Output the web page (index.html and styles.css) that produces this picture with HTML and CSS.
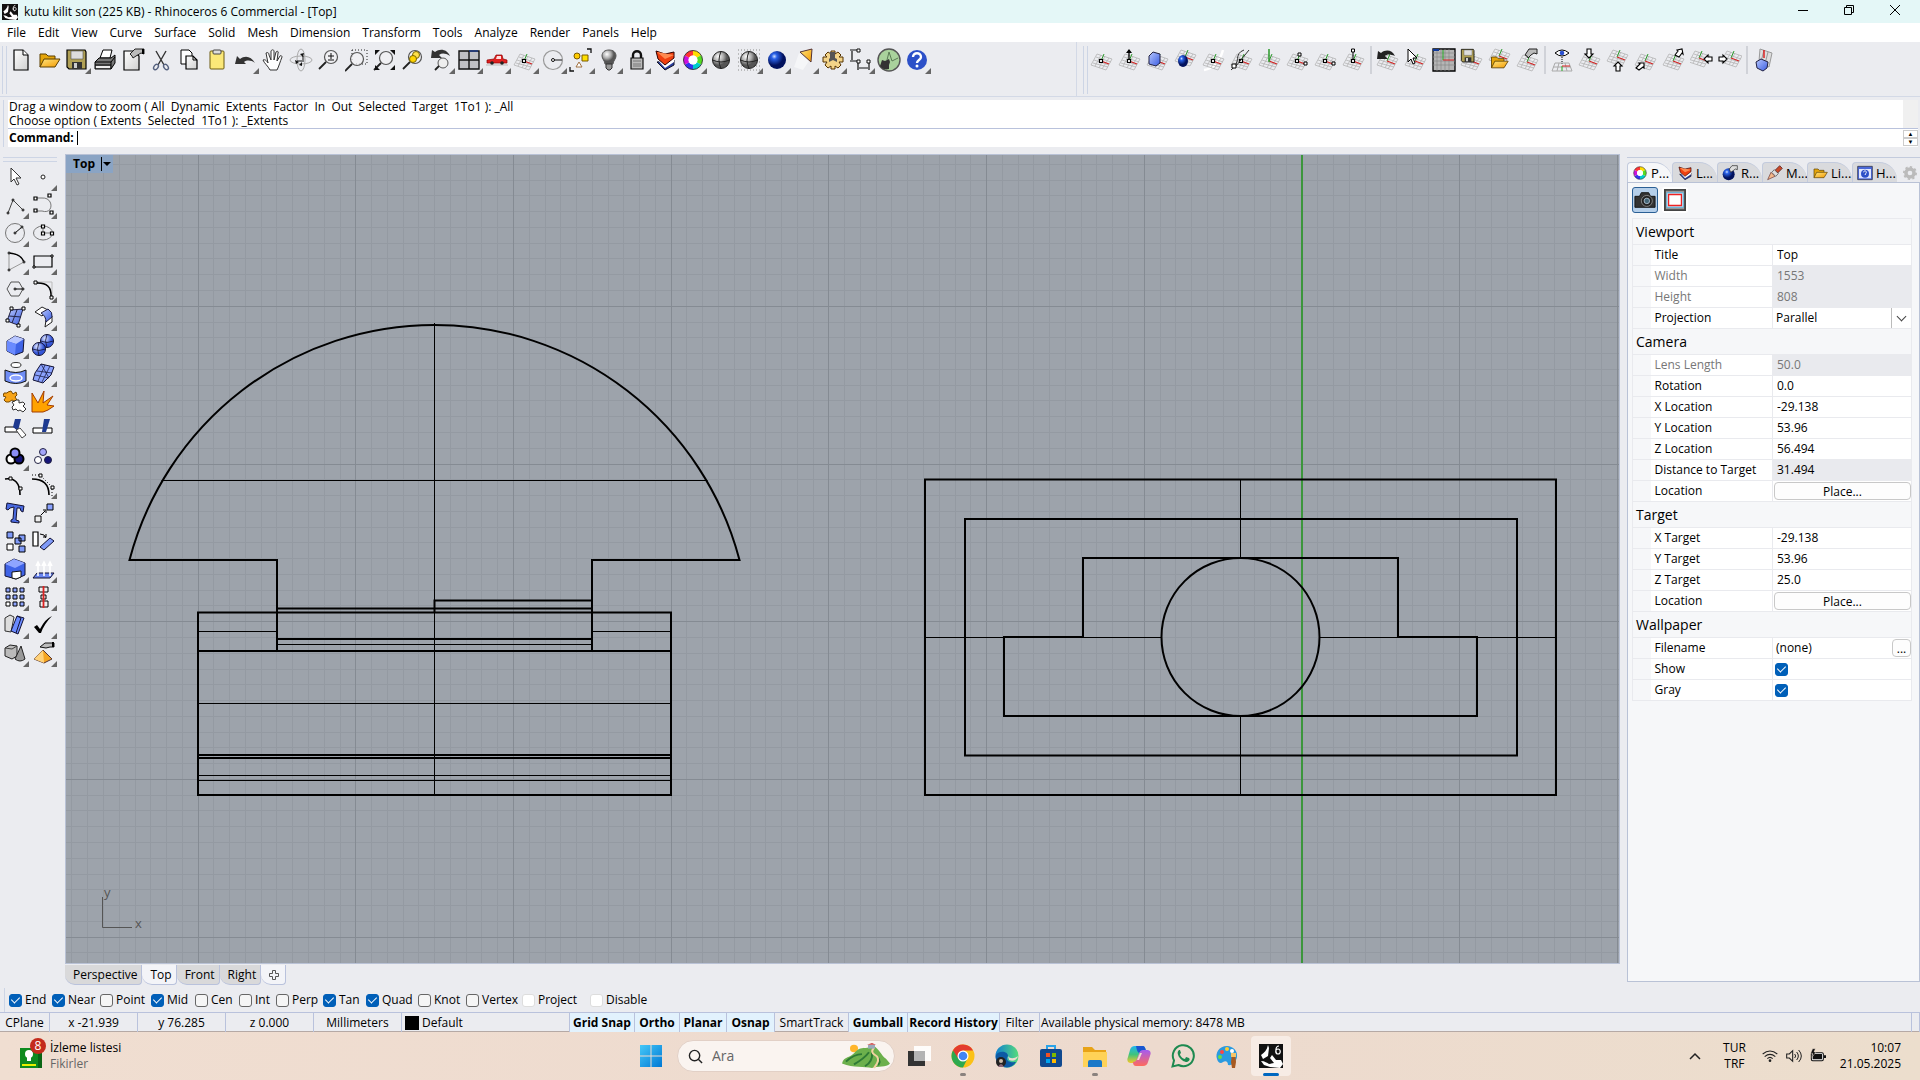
FILE: index.html
```html
<!DOCTYPE html>
<html lang="en">
<head>
  <meta charset="UTF-8" />
  <meta name="viewport" content="width=device-width, initial-scale=1" />
  <title>kutu kilit son (225 KB) - Rhinoceros 6 Commercial - [Top]</title>
  <link rel="stylesheet" href="styles.css">
</head>
<body>

  <!-- Icon sprite -->
  <svg class="sprite" width="0" height="0" aria-hidden="true">
    <defs>
      <linearGradient id="gPaper" x2="1" y2="1"><stop stop-color="#fff"/><stop offset="1" stop-color="#cfcfcf"/></linearGradient>
      <linearGradient id="gGold" x2="1" y2="1"><stop stop-color="#ffe680"/><stop offset="1" stop-color="#f39a00"/></linearGradient>
      <linearGradient id="gBlue" x2="1" y2="1"><stop stop-color="#b8c8ff"/><stop offset="1" stop-color="#3a5ce0"/></linearGradient>
      <linearGradient id="gWin" x2="1" y2="1"><stop stop-color="#45c8f8"/><stop offset="1" stop-color="#0078d4"/></linearGradient>
      <linearGradient id="gEdge" x2="1" y2="0"><stop stop-color="#0f7fd0"/><stop offset="1" stop-color="#57dc7c"/></linearGradient>
      <linearGradient id="gCopL" x2="0" y2="1"><stop stop-color="#1fb6f0"/><stop offset=".5" stop-color="#3fc47c"/><stop offset="1" stop-color="#f5c928"/></linearGradient>
      <linearGradient id="gCopR" x2="0" y2="1"><stop stop-color="#a45cf0"/><stop offset="1" stop-color="#ff6a5c"/></linearGradient>
      <radialGradient id="gGray" cx=".35" cy=".3"><stop stop-color="#fff"/><stop offset=".6" stop-color="#aaa"/><stop offset="1" stop-color="#555"/></radialGradient>
      <radialGradient id="gBall" cx=".35" cy=".3"><stop stop-color="#cfe0ff"/><stop offset=".3" stop-color="#2a62e8"/><stop offset="1" stop-color="#02125e"/></radialGradient>
      <radialGradient id="gBall2" cx=".35" cy=".3"><stop stop-color="#dfe6ff"/><stop offset="1" stop-color="#3556d8"/></radialGradient>
    </defs>

    <symbol id="i-rhino" viewBox="0 0 24 24"><path fill="#111" d="M0 0h24v24H0z"/><path fill="#fff" d="M9 1c-1 5-4 8-7 10l2 4 5-3 1-8zM2 17c4 0 6 2 8 3l5-1-4-5 2-3 4 5 5 0 2 4-3 4-10-1-6-2z"/><path d="M20 2c-4 0-4 8-1 8s3-5 0-5-3 5 0 5" fill="none" stroke="#fff" stroke-width="1.2"/></symbol>
    <symbol id="i-new" viewBox="0 0 24 24"><path d="M5 2h9l5 5v15H5z" fill="url(#gPaper)" stroke="#000" stroke-width="1.2"/><path d="M14 2v5h5" fill="#fff" stroke="#000"/></symbol>
    <symbol id="i-open" viewBox="0 0 24 24"><path d="M3 19V6h6l2 2h7v3" fill="#e5a50a" stroke="#5a3f00"/><path d="M3 19l4-8h16l-5 8z" fill="url(#gGold)" stroke="#5a3f00"/></symbol>
    <symbol id="i-save" viewBox="0 0 24 24"><path d="M2 2h18l1 2v17H4l-2-2z" fill="#b0a055" stroke="#000" stroke-width="1.2"/><path d="M6 3h12v8H6z" fill="#ddd" stroke="#555" stroke-width=".6"/><path d="M7 14h10v7H7z" fill="#333"/><path d="M9 15h3v5H9z" fill="#ccc"/></symbol>
    <symbol id="i-print" viewBox="0 0 24 24"><path d="M7 10l3-8h9l-2 8z" fill="#fff" stroke="#000"/><path d="M2 14l4-4h12l4-3v8l-4 6H2z" fill="#777" stroke="#000"/><path d="M2 14h16l4-5M2 17h16M18 14v7" stroke="#000" fill="none"/><path d="M3 18h14v2H3z" fill="#eee"/></symbol>
    <symbol id="i-props" viewBox="0 0 24 24"><path d="M3 3h9l6 5v14H3z" fill="url(#gPaper)" stroke="#000" stroke-width="1.2"/><path d="M9 6l5-5h9v5l-3-1-5 3-3 2-1-2z" fill="#bbb" stroke="#222"/><path d="M21 1h2v5h-2z" fill="#000"/></symbol>
    <symbol id="i-cut" viewBox="0 0 24 24"><path d="M7 3l8 14M17 3L9 17" stroke="#333" stroke-width="1.4"/><ellipse cx="7" cy="19" rx="2" ry="3" fill="none" stroke="#56627f" stroke-width="1.4" transform="rotate(35 7 19)"/><ellipse cx="17" cy="19" rx="2" ry="3" fill="none" stroke="#56627f" stroke-width="1.4" transform="rotate(-35 17 19)"/></symbol>
    <symbol id="i-copy" viewBox="0 0 24 24"><path d="M4 2h8l3 3v11H4z" fill="#fff" stroke="#000"/><path d="M9 8h7l4 4v9H9z" fill="url(#gPaper)" stroke="#000" stroke-width="1.2"/><path d="M16 8v4h4" fill="none" stroke="#000"/></symbol>
    <symbol id="i-paste" viewBox="0 0 24 24"><rect x="5" y="3" width="14" height="18" rx="1" fill="#fbe878" stroke="#6b5a10"/><rect x="8" y="2" width="8" height="4" rx="1" fill="#ddd" stroke="#444"/></symbol>
    <symbol id="i-undo" viewBox="0 0 24 24"><path d="M2 16l2-8 3 3c5-4 11-3 15 4-4-3-8-3-11-1l2 2z" fill="#333"/></symbol>
    <symbol id="i-pan" viewBox="0 0 24 24"><path d="M9 22c-2-4-6-7-7-10 2-1 4 1 5 3L5 5c2-1 3 0 3 2l2 5V3c1-2 3-1 3 0v9l2-8c1-1 3-1 2 1l-1 8 3-5c1-1 2 0 2 1-2 5-3 9-5 13z" fill="#fff" stroke="#333"/></symbol>
    <symbol id="i-rotate" viewBox="0 0 24 24"><g fill="none" stroke="#aaa"><ellipse cx="12" cy="12" rx="11" ry="4"/><ellipse cx="12" cy="12" rx="4" ry="11"/></g><path d="M11 6l4-1-1 4zM13 18l-3-1 3-3zM6 12l4 2-3 2z" fill="#111"/><path d="M8 13h5M14 8v6" stroke="#111"/></symbol>
    <symbol id="lens" viewBox="0 0 24 24"><circle cx="14" cy="9" r="6.5" fill="#f2f2f4" fill-opacity=".7" stroke="#555" stroke-width="1.2"/><path d="M9 14l-7 7" stroke="#222" stroke-width="1.8"/></symbol>
    <symbol id="i-zoom" viewBox="0 0 24 24"><use href="#lens"/><path d="M11 8h6M14 5v6M11 12h6" stroke="#111"/></symbol>
    <symbol id="i-zoomwin" viewBox="0 0 24 24"><path d="M7 2h15v14H7z" fill="none" stroke="#222" stroke-dasharray="1 2"/><use href="#lens" y="2" x="-2"/></symbol>
    <symbol id="i-zoomext" viewBox="0 0 24 24"><use href="#lens" x="-1" y="1"/><path d="M2 2h5L2 7zM22 2h-5l5 5zM2 22v-5l5 5zM22 22v-5l-5 5z" fill="#111"/></symbol>
    <symbol id="i-zoomsel" viewBox="0 0 24 24"><use href="#lens"/><circle cx="15" cy="7" r="3.5" fill="#ffe14a" stroke="#7a6500"/><circle cx="12" cy="11" r="3.5" fill="#ffd400" stroke="#7a6500"/></symbol>
    <symbol id="i-zoomundo" viewBox="0 0 24 24"><path d="M2 10l1-8 3 2c5-4 12-3 15 4-5-3-8-3-11-1l3 3z" fill="#333"/><circle cx="14" cy="15" r="5" fill="#eee" stroke="#555"/><path d="M10 18l-4 4" stroke="#222" stroke-width="1.8"/></symbol>
    <symbol id="i-4view" viewBox="0 0 24 24"><path d="M2 3h20v18H2z" fill="#c0c0c4" stroke="#111" stroke-width="1.4"/><path d="M12 3v18M2 12h20" stroke="#111" stroke-width="1.4"/><path d="M12 3h9" stroke="#1c3a8c" stroke-width="1.4"/></symbol>
    <symbol id="i-car" viewBox="0 0 24 24"><path d="M1 17h22" stroke="#bbb"/><path d="M2 12l7-1 2-4h6l1 4 4 1v3H2z" fill="#e02020" stroke="#8a0000" stroke-width=".7"/><path d="M12 8h4v3h-5z" fill="#fdd"/><circle cx="7" cy="15" r="1.800" fill="#222"/><circle cx="17" cy="15" r="1.800" fill="#222"/></symbol>
    <symbol id="cp" viewBox="0 0 24 24"><path d="M7 6l15 5-6 11-15-5zM11 7L5 18M15 8L9 20M19 10l-7 11M6 9l15 5M4 12l15 5M3 15l15 4" fill="none" stroke="#b4b4b4" stroke-width=".8"/><path d="M11 13l3-7" stroke="#2a9a2a"/><path d="M11 13l8 3" stroke="#d02020" stroke-width="1.2"/></symbol>
    <symbol id="i-cplane" viewBox="0 0 24 24"><use href="#cp"/><path d="M9.500 11.500h3v3h-3z" fill="#fff" stroke="#000" stroke-width="1.2"/></symbol>
    <symbol id="i-circ" viewBox="0 0 24 24"><circle cx="12" cy="12" r="9.5" fill="none" stroke="#999" stroke-width="1.2"/><path d="M12 12h9" stroke="#111"/><circle cx="12" cy="12" r="1.5" fill="#fff" stroke="#111"/></symbol>
    <symbol id="i-sel" viewBox="0 0 24 24"><path d="M18 1h4v4M1 19v4h4" fill="none" stroke="#111" stroke-width="1.3"/><circle cx="8" cy="8" r="3" fill="#fc0" stroke="#7a5a00"/><path d="M13 7h6v6h-6z" fill="#ffe000" stroke="#7a5a00"/><path d="M10 14l3 5H7z" fill="#fff" stroke="#a07040"/></symbol>
    <symbol id="i-bulb" viewBox="0 0 24 24"><path d="M8 16c0-3-3-5-3-8 0-4 3-6 7-6s7 2 7 6c0 3-3 5-3 8z" fill="url(#gGray)" stroke="#555" /><path d="M9 16h6v4l-2 2h-2l-2-2z" fill="#999" stroke="#333"/></symbol>
    <symbol id="i-lock" viewBox="0 0 24 24"><path d="M8 11V7c0-5 8-5 8 0v4" fill="none" stroke="#111" stroke-width="2.4"/><path d="M6 10h12v11H6z" fill="#bbb" stroke="#111" stroke-width="1.2"/><path d="M8 13h8M8 16h8M8 18h8" stroke="#777"/></symbol>
    <symbol id="i-layer" viewBox="0 0 24 24"><path d="M4 14l8 8 9-5v-5z" fill="#2b3fa0" stroke="#112"/><path d="M4 11l8 9 9-6V9z" fill="#fff"/><path d="M3 3l9 3 9-2v6l-9 7-7-6z" fill="#f04010" stroke="#300"/><path d="M4 4l17 3-9 4z" fill="#ff8a50"/></symbol>
    <symbol id="i-wheel" viewBox="0 0 24 24"><g fill="none" stroke-width="5"><path d="M12 5a7 7 0 0 1 6 3.500" stroke="#fd0"/><path d="M18 8.500a7 7 0 0 1 0 7" stroke="#5d2"/><path d="M18 15.500a7 7 0 0 1-6 3.500" stroke="#0cc"/><path d="M12 19a7 7 0 0 1-6-3.500" stroke="#33e"/><path d="M6 15.500a7 7 0 0 1 0-7" stroke="#c1d"/><path d="M6 8.500A7 7 0 0 1 12 5" stroke="#f33"/></g><circle cx="12" cy="12" r="9.500" fill="none" stroke="#222" stroke-width=".8"/><circle cx="12" cy="12" r="4.500" fill="#fff"/></symbol>
    <symbol id="i-sphere" viewBox="0 0 24 24"><circle cx="12" cy="12" r="8.500" fill="url(#gGray)" stroke="#222"/><path d="M3.500 12q8.500 4 17 0M12 3.500q-4 9 0 17" fill="none" stroke="#222"/></symbol>
    <symbol id="i-spheregrid" viewBox="0 0 24 24"><path d="M1 2h22M1 6h22M1 10h22M1 14h22M1 18h22M1 22h22" stroke="#aaa" stroke-width="1.5" stroke-dasharray="1 2"/><use href="#i-sphere"/></symbol>
    <symbol id="i-ball" viewBox="0 0 24 24"><circle cx="12" cy="12" r="9" fill="url(#gBall)"/></symbol>
    <symbol id="i-spot" viewBox="0 0 24 24"><path d="M6 5l-5 14 9 3 6-9z" fill="#fff" opacity=".5"/><path d="M7 4l12-3-1 13z" fill="url(#gGold)" stroke="#533"/></symbol>
    <symbol id="i-gear" viewBox="0 0 24 24"><path d="M10 3h4v3l3-2 3 3-2 2h4v5h-4l2 3-3 3-3-2v3h-4v-3l-3 2-3-3 2-3H2V9h4L4 7l3-3 3 2z" fill="#f3d489" stroke="#553300"/><path d="M9 4h5v6l2 1v3l-4-2-4 2v-3l1-1z" fill="#555"/></symbol>
    <symbol id="i-dims" viewBox="0 0 24 24"><path d="M1 2h8M1 13h8M3 3v9M9 13v9M20 13v9M10 20h9" fill="none" stroke="#111" stroke-width="1.2"/><path d="M8 1h3v3H8zM8 12h3v3H8zM18 12h3v3h-3z" fill="#fff" stroke="#111"/></symbol>
    <symbol id="i-gh" viewBox="0 0 24 24"><circle cx="12" cy="12" r="11" fill="#a9d29c" stroke="#555" stroke-width="1.4"/><path d="M3 18l2-6 3 1 4-2 1 3-1 3v4c-4 1-7 0-9-3z" fill="#333"/><path d="M10 12l2-8 3 9 6-3" fill="none" stroke="#5a7a54"/></symbol>
    <symbol id="i-help" viewBox="0 0 24 24"><circle cx="12" cy="12" r="10" fill="#2c50c8"/><path d="M8 9c0-5 8-5 8 0 0 3-4 3-4 6" fill="none" stroke="#fff" stroke-width="2.4"/><circle cx="12" cy="18" r="1.500" fill="#fff"/></symbol>

    <!-- CPlane toolbar -->
    <symbol id="c-elev" viewBox="0 0 24 24"><use href="#i-cplane"/><path d="M11 11V2" stroke="#000" stroke-width="1.3"/><path d="M8 5l3-4 3 4z"/></symbol>
    <symbol id="c-obj" viewBox="0 0 24 24"><use href="#cp"/><path d="M3 8l4-4 7 2v9l-4 3-7-2z" fill="url(#gBlue)" stroke="#224"/></symbol>
    <symbol id="c-srf" viewBox="0 0 24 24"><use href="#cp" y="-4"/><ellipse cx="9" cy="13" rx="5" ry="6" fill="url(#gBall)"/></symbol>
    <symbol id="c-crv" viewBox="0 0 24 24"><path d="M2 22Q16 20 21 2" fill="none" stroke="#fff" stroke-width="2.500"/><use href="#i-cplane"/></symbol>
    <symbol id="c-crv2" viewBox="0 0 24 24"><use href="#i-cplane"/><path d="M1 22C12 14 3 6 14 2M6 18L19 2" fill="none" stroke="#333"/><path d="M2 16h4v4H2z" fill="#fff" stroke="#000"/></symbol>
    <symbol id="c-vert" viewBox="0 0 24 24"><use href="#cp"/><path d="M11 14V1" stroke="#2a9a2a" stroke-width="1.500"/></symbol>
    <symbol id="c-3pt" viewBox="0 0 24 24"><use href="#i-cplane"/><path d="M12 5h3v3h-3zM18 14h3v3h-3z" fill="#fff" stroke="#000"/></symbol>
    <symbol id="c-x" viewBox="0 0 24 24"><use href="#i-cplane"/><path d="M18 14h3v3h-3z" fill="#fff" stroke="#000"/></symbol>
    <symbol id="c-z" viewBox="0 0 24 24"><use href="#i-cplane"/><path d="M11 11V3" stroke="#000"/><path d="M9.500 1h3v3h-3z" fill="#fff" stroke="#000"/></symbol>
    <symbol id="c-prev" viewBox="0 0 24 24"><use href="#cp"/><path d="M1 11l1-8 3 2c5-4 11-3 14 3-5-2-8-2-10 0l3 3z" fill="#222"/></symbol>
    <symbol id="c-pick" viewBox="0 0 24 24"><use href="#cp"/><path d="M4 1v13l3-3 2 5 2-1-2-5h4z" fill="#fff" stroke="#000"/></symbol>
    <symbol id="c-named" viewBox="0 0 24 24"><path d="M1 1h22v22H1z" fill="#b5b5b5" stroke="#000" stroke-width="1.300"/><path d="M1 5h22M1 9h22M1 13h22M1 17h22M5 1v22M9 1v22M13 1v22M17 1v22" stroke="#888" stroke-width=".7"/><path d="M11 12V2" stroke="#2a2"/><path d="M11 12h11" stroke="#d22"/><path d="M1 1h6v2H1z" fill="#113a9a"/></symbol>
    <symbol id="c-save" viewBox="0 0 24 24"><use href="#cp"/><use href="#i-save" width="16" height="16"/></symbol>
    <symbol id="c-open" viewBox="0 0 24 24"><use href="#cp" y="-5"/><use href="#i-open" y="4" width="22" height="20"/></symbol>
    <symbol id="c-prop" viewBox="0 0 24 24"><use href="#cp" y="1"/><path d="M9 7l4-6h8v5l-3-1-3 2-3 3-1-2z" fill="#bbb" stroke="#222"/></symbol>
    <symbol id="c-top" viewBox="0 0 24 24"><path d="M5 5q7-6 14 0-7 6-14 0z" fill="#fff" stroke="#000"/><circle cx="12" cy="5" r="2.300" fill="#2a50d0"/><path d="M12 9v8" stroke="#000" stroke-dasharray="1 1"/><path d="M5 15h14l3 8H2zM3 19h18M9 15l-2 8M15 15l2 8" fill="none" stroke="#aaa"/><path d="M12 18v5" stroke="#2a2"/><path d="M12 18h8" stroke="#d22"/></symbol>
    <symbol id="arrow" viewBox="0 0 24 24"><path d="M9 1h4v5h2l-4 4-4-4h2z" fill="#fff" stroke="#000" stroke-width="1.100"/></symbol>
    <symbol id="c-down" viewBox="0 0 24 24"><use href="#cp"/><use href="#arrow"/></symbol>
    <symbol id="c-up" viewBox="0 0 24 24"><use href="#cp" y="-4"/><path d="M10 23h4v-5h2l-4-4-4 4h2z" fill="#fff" stroke="#000" stroke-width="1.100"/></symbol>
    <symbol id="c-front" viewBox="0 0 24 24"><use href="#cp"/><path d="M2 20l4-4-1-1h5v5l-1-1-4 3z" fill="#fff" stroke="#000" stroke-width="1.100"/></symbol>
    <symbol id="c-back" viewBox="0 0 24 24"><use href="#cp"/><path d="M13 7l3-4-1-1 5-1 1 5-1-1-3 4z" fill="#fff" stroke="#000" stroke-width="1.100"/></symbol>
    <symbol id="c-left" viewBox="0 0 24 24"><use href="#cp" x="-2" y="-3"/><path d="M22 9h-4V7l-4 4 4 4v-2h4z" fill="#fff" stroke="#000" stroke-width="1.100"/></symbol>
    <symbol id="c-right" viewBox="0 0 24 24"><use href="#cp" x="2" y="-3"/><path d="M1 9h4V7l4 4-4 4v-2H1z" fill="#fff" stroke="#000" stroke-width="1.100"/></symbol>
    <symbol id="c-world" viewBox="0 0 24 24"><path d="M8 1l12 4-3 14-10-6zM12 2l-3 12M16 4l-3 12" fill="#ddd" stroke="#999"/><path d="M12 10V2" stroke="#d22" stroke-width="1.500"/><path d="M4 14l5-3 7 3-1 6-4 3-6-3z" fill="url(#gBlue)" stroke="#224"/></symbol>

    <!-- Left palette -->
    <symbol id="p-arrow" viewBox="0 0 24 24"><path d="M8 3v14l3-3 3 6 2-1-3-6h5z" fill="#fff" stroke="#333"/></symbol>
    <symbol id="p-point" viewBox="0 0 24 24"><circle cx="12" cy="12" r="2" fill="#fff" stroke="#222"/></symbol>
    <symbol id="p-poly" viewBox="0 0 24 24"><path d="M5 20L10 7l10 10" fill="none" stroke="#444"/><g fill="#fff" stroke="#000"><circle cx="5" cy="20" r="1"/><circle cx="10" cy="7" r="1"/><circle cx="20" cy="17" r="1"/></g></symbol>
    <symbol id="p-curve" viewBox="0 0 24 24"><path d="M5 5h6c12-1 12 17 0 13H5" fill="none" stroke="#777"/><path d="M3 4h3v3H3zM17 1h3v3h-3zM3 16h3v3H3zM19 18h3v3h-3z" fill="#fff" stroke="#000" stroke-width="1.200"/></symbol>
    <symbol id="p-circle" viewBox="0 0 24 24"><circle cx="12" cy="12" r="9.500" fill="none" stroke="#777"/><path d="M12 12l7-6" stroke="#000"/><g fill="#fff" stroke="#000"><circle cx="12" cy="12" r="1"/><circle cx="19" cy="6" r="1"/></g></symbol>
    <symbol id="p-ellipse" viewBox="0 0 24 24"><ellipse cx="12" cy="12" rx="9.500" ry="7" fill="none" stroke="#777"/><path d="M12 12V5M12 12h9" stroke="#777"/><path d="M10.500 4h3v3h-3zM10.500 11h3v3h-3zM19.500 11h3v3h-3z" fill="#fff" stroke="#000" stroke-width="1.200"/></symbol>
    <symbol id="p-arc" viewBox="0 0 24 24"><path d="M6 4v17l15-8" fill="none" stroke="#999"/><path d="M6 4q12 1 15 9" fill="none" stroke="#000" stroke-width="1.300"/><g fill="#fff" stroke="#000"><circle cx="6" cy="4" r="1"/><circle cx="6" cy="21" r="1"/><circle cx="21" cy="13" r="1"/></g></symbol>
    <symbol id="p-rect" viewBox="0 0 24 24"><path d="M3 7h18v11H3z" fill="none" stroke="#000" stroke-width="1.200"/><path d="M20 6h2v2h-2zM2 17h2v2H2z" fill="#fff" stroke="#000"/></symbol>
    <symbol id="p-hex" viewBox="0 0 24 24"><path d="M4 12l4-7h8l4 7-4 7H8z" fill="none" stroke="#555"/><path d="M12 12h8" stroke="#000"/><circle cx="12" cy="12" r="1" fill="#fff" stroke="#000"/><circle cx="20" cy="12" r="1" fill="#fff" stroke="#000"/></symbol>
    <symbol id="p-fillet" viewBox="0 0 24 24"><path d="M4 5h17v16" fill="none" stroke="#bbb"/><path d="M5 6q16-1 15 14" fill="none" stroke="#000" stroke-width="1.600"/><path d="M3 4h3v3H3zM19 19h3v3h-3z" fill="#fff" stroke="#000"/></symbol>
    <symbol id="p-srf" viewBox="0 0 24 24"><path d="M8 5l12-1-5 16-11-4z" fill="url(#gBlue)" stroke="#224"/><path d="M14 5l-5 13M6 11l12 1" stroke="#224"/><path d="M7 2h3v3H7zM19 2h3v3h-3zM3 14h3v3H3zM14 19h3v3h-3z" fill="#fff" stroke="#000"/></symbol>
    <symbol id="p-loft" viewBox="0 0 24 24"><path d="M4 7l7-5 6 3-6 6z" fill="#fff" stroke="#222"/><path d="M15 15l6-4v6l-7 5z" fill="#fff" stroke="#222"/><path d="M10 8l7-4q5 3 4 8l-6 5q0-6-5-9z" fill="url(#gBlue)" stroke="#224"/></symbol>
    <symbol id="p-box" viewBox="0 0 24 24"><path d="M4 8l8-5 9 3-1 13-8 3-8-4z" fill="#3f63e6" stroke="#113"/><path d="M4 8l8-5 9 3-8 5z" fill="#b8c6ff"/><path d="M4 8l9 3-1 11-8-4z" fill="#6a8aff"/></symbol>
    <symbol id="p-spheres" viewBox="0 0 24 24"><circle cx="16" cy="8" r="6.500" fill="url(#gBall2)" stroke="#113"/><circle cx="8" cy="16" r="6.500" fill="url(#gBall2)" stroke="#113"/><path d="M9.500 8q6.500 3 13 0M1.500 16q6.500 3 13 0M16 1.500q-3 6 0 13M8 9.500q-3 6 0 13" fill="none" stroke="#113" stroke-width=".8"/></symbol>
    <symbol id="p-proj" viewBox="0 0 24 24"><ellipse cx="13" cy="4" rx="5" ry="2.500" fill="#fff" stroke="#333"/><path d="M2 9q11 5 21 0v11q-10 5-21 0z" fill="#6f8df5" stroke="#111"/><ellipse cx="13" cy="17" rx="6" ry="3" fill="#8aa2ff" stroke="#fff" stroke-width="1.500"/></symbol>
    <symbol id="p-mesh" viewBox="0 0 24 24"><path d="M10 3l13 3-3 8-8 8-10-3 2-7z" fill="#8aa2ff" stroke="#113"/><path d="M14 4L7 20M19 5l-8 16M6 10l15 2M4 14l14 3M10 3l8 14" fill="none" stroke="#113" stroke-width=".7"/></symbol>
    <symbol id="p-join" viewBox="0 0 24 24"><path d="M5 3l3-1 2 3 3-2 1 3-2 2 2 3-3 1-2-1-3 2-3 0-2-2 2-3-3-1 1-3 3 0z" fill="#f7a416" stroke="#7a4a00"/><path d="M13 11l3 0 0 3 4-1 2 2-2 2 3 3-3 3-3-2-2 1-2-2-3 1-1-3 2-2-2-3 3-1z" fill="#fff" stroke="#333"/></symbol>
    <symbol id="p-explode" viewBox="0 0 24 24"><path d="M1 23V4l6 10 6-12-1 12 10-7-6 9 7 1-6 4-5 2z" fill="#ffa200" stroke="#a33c00"/></symbol>
    <symbol id="p-trim" viewBox="0 0 24 24"><path d="M2 10h10l3 5H2z" fill="#fff" stroke="#000"/><path d="M12 2h6l-3 12-5-4z" fill="#1e3a90"/><path d="M13 13l4-2 6 7-4 3z" fill="#fff" stroke="#444"/></symbol>
    <symbol id="p-split" viewBox="0 0 24 24"><path d="M2 11h19v5H2z" fill="#fff" stroke="#000"/><path d="M13 2h6l-4 13h-4z" fill="#1e3a90"/></symbol>
    <symbol id="p-group" viewBox="0 0 24 24"><g stroke="#000" stroke-width="2"><circle cx="8" cy="14" r="4.500" fill="#fff"/><circle cx="16" cy="14" r="4.500" fill="#15157a"/><circle cx="12" cy="8" r="4.500" fill="#8a8df5"/></g></symbol>
    <symbol id="p-ungroup" viewBox="0 0 24 24"><g stroke="#224"><circle cx="12" cy="7" r="3.500" fill="#a4a6fa"/><circle cx="7" cy="15" r="3.500" fill="#fff"/><circle cx="17" cy="15" r="3.500" fill="#15157a"/></g></symbol>
    <symbol id="p-edit" viewBox="0 0 24 24"><path d="M2 6q15-2 15 16" fill="none" stroke="#000" stroke-width="1.600"/><path d="M6 4h3v3H6zM16 14h3v3h-3z" fill="#fff" stroke="#000"/></symbol>
    <symbol id="p-ctrl" viewBox="0 0 24 24"><path d="M1 6q17 0 17 16" fill="none" stroke="#000" stroke-width="1.600"/><path d="M1 2h8l12 12v9" fill="none" stroke="#000" stroke-dasharray="1 2"/><path d="M8 1h3v3H8zM20 13h3v3h-3z" fill="#fff" stroke="#000"/></symbol>
    <symbol id="p-text" viewBox="0 0 24 24"><path d="M4 2l17 3-1 6-2-1-1-3h-3l-1 12 3 1v2l-8-1v-2l2-1 1-12-4 1-2 2-2-1z" fill="#4a6ae0" stroke="#113"/></symbol>
    <symbol id="p-move" viewBox="0 0 24 24"><path d="M16 3h6v6h-6z" fill="#8aa2ff" stroke="#000"/><path d="M4 15h6v6H4z" fill="#eee" stroke="#000"/><path d="M10 14l4-4M12 9h3v3" fill="none" stroke="#000"/></symbol>
    <symbol id="p-copy" viewBox="0 0 24 24"><g fill="#7f9af8" stroke="#000"><path d="M4 3h6v6H4zM16 6h6v6h-6zM12 9h6v6h-6zM16 17h6v6h-6z"/></g><path d="M4 15h6v6H4z" fill="#fff" stroke="#000"/></symbol>
    <symbol id="p-rot" viewBox="0 0 24 24"><path d="M2 3h5v14H2z" fill="#fff" stroke="#000" stroke-width="1.200"/><path d="M9 5q5 0 6 4M12 8h3V5" fill="none" stroke="#000"/><path d="M9 18l10-9 4 3-10 9z" fill="#7f9af8" stroke="#113"/></symbol>
    <symbol id="p-bool" viewBox="0 0 24 24"><path d="M2 7l9-5 11 4v12l-9 4-11-3z" fill="#3f63e6" stroke="#113"/><path d="M2 7l9-5 11 4-10 5z" fill="#8fa5ff"/><path d="M9 15l9-1v6l-5 2-4-1z" fill="#fff" stroke="#111"/></symbol>
    <symbol id="p-array" viewBox="0 0 24 24"><path d="M6 16h17l-4 5H2z" fill="#6a86f0" stroke="#113"/><path d="M7 19V6M13 19V6M19 19V6M5 9l2-4 2 4M11 9l2-4 2 4M17 9l2-4 2 4" fill="none" stroke="#fff" stroke-width="1.600"/></symbol>
    <symbol id="p-grid" viewBox="0 0 24 24"><path d="M3 3h4v4H3zM10 3h4v4h-4zM17 3h4v4h-4zM3 10h4v4H3zM10 10h4v4h-4zM17 10h4v4h-4zM10 17h4v4h-4zM17 17h4v4h-4z" fill="#8fa5ff" stroke="#000"/><path d="M3 17h4v4H3z" fill="#fff" stroke="#000"/></symbol>
    <symbol id="p-align" viewBox="0 0 24 24"><path d="M8 2h9v5H8zM10 10h5v4h-5zM9 16h8v6H9z" fill="#eee" stroke="#000"/><path d="M12.500 1v22" stroke="#d22" stroke-width="1.800"/></symbol>
    <symbol id="p-bend" viewBox="0 0 24 24"><path d="M2 5l5-3 4 2-3 15-6-1z" fill="#ddd" stroke="#333"/><path d="M14 3l7 2-6 16-7-3z" fill="#6a8aff" stroke="#113"/><path d="M14 3l4 2-5 15" fill="none" stroke="#113"/></symbol>
    <symbol id="p-check" viewBox="0 0 24 24"><path d="M3 14l3-2 3 4Q14 6 21 3 13 11 10 20H8z" fill="#000"/></symbol>
    <symbol id="p-solids" viewBox="0 0 24 24"><path d="M2 7l5-3 7 1v10l-5 3-7-3z" fill="#bbb" stroke="#222"/><path d="M18 5l4 13q-5 4-10 0z" fill="#999" stroke="#222"/><path d="M2 7l7 1 5-3" fill="none" stroke="#444"/></symbol>
    <symbol id="p-pyr" viewBox="0 0 24 24"><path d="M12 9l9 9-8 4-10-4z" fill="#f5a623" stroke="#533"/><path d="M12 9l1 13-10-4z" fill="#ffd27a"/><path d="M9 6l5-4h9v4h-4l-4 1z" fill="#bbb" stroke="#111"/><path d="M21 1h2v5h-2z"/></symbol>

    <!-- Panel tabs -->
    <symbol id="t-render" viewBox="0 0 24 24"><circle cx="10" cy="14" r="9" fill="url(#gBall)"/><path d="M11 6l4-5h8v6l-3-1-4 3-3 2z" fill="#ddd" stroke="#222"/></symbol>
    <symbol id="t-brush" viewBox="0 0 24 24"><path d="M12 8l7-7 4 4-7 7z" fill="#c94a2a" stroke="#411"/><path d="M7 11l4-4 6 6-4 4z" fill="#ddd" stroke="#444"/><path d="M1 22l5-11 6 6z" fill="#f4b88a" stroke="#633"/></symbol>
    <symbol id="t-helpwin" viewBox="0 0 24 24"><path d="M1 2h22v20H1z" fill="#4a68d8" stroke="#223"/><path d="M3 6h18v14H3z" fill="#dfe6ff"/><circle cx="12" cy="13" r="6" fill="#2c50c8"/><path d="M10 11c0-3 4-3 4 0 0 2-2 2-2 4" fill="none" stroke="#fff" stroke-width="1.500"/></symbol>
    <symbol id="t-camera" viewBox="0 0 24 24"><path d="M1 8h5l2-4h8l2 4h5v12H1z" fill="#333" stroke="#111"/><circle cx="14" cy="13" r="6" fill="#222" stroke="#888"/><circle cx="14" cy="13" r="3" fill="#467" stroke="#abc"/></symbol>
    <symbol id="t-frame" viewBox="0 0 24 24"><path d="M1 1h22v22H1z" fill="#999" stroke="#444" stroke-width="2"/><path d="M3 4h18v16H3z" fill="#cde8f8" stroke="#5bb4e0"/><path d="M5 6h14v12H5z" fill="#fff" stroke="#e22" stroke-width="1.400"/></symbol>

    <!-- Taskbar -->
    <symbol id="w-start" viewBox="0 0 24 24"><path d="M1 1h10.500v10.500H1zM12.500 1H23v10.500H12.500zM1 12.500h10.500V23H1zM12.500 12.500H23V23H12.500z" fill="url(#gWin)"/></symbol>
    <symbol id="w-task" viewBox="0 0 24 24"><path d="M1 7h17v15H1z" fill="#333"/><path d="M7 2h17v15H7z" fill="#fff" fill-opacity=".9"/><path d="M7 7h11v10H7z" fill="#b4b4b4"/></symbol>
    <symbol id="w-chrome" viewBox="0 0 24 24"><circle cx="12" cy="12" r="11.500" fill="#fbc116"/><path d="M12 12h-5L2 6.300A11.500 11.500 0 0 0 12 23.500l4-8z" fill="#2da94f"/><path d="M12 6.500h10A11.500 11.500 0 0 0 2 6.300l5 8z" fill="#e33b2e"/><circle cx="12" cy="12" r="5.500" fill="#fff"/><circle cx="12" cy="12" r="4.300" fill="#4285f4"/></symbol>
    <symbol id="w-edge" viewBox="0 0 24 24"><circle cx="12" cy="12" r="11.500" fill="url(#gEdge)"/><path d="M1 11c3-5 12-4 12 1-3 3 0 7 8 6-3 5-9 7-14 4C2 20 0 15 1 11z" fill="#0c59a4"/><path d="M13 12c2 3 6 3 10 0-1 4-5 6-9 4z" fill="#eedcd0"/><circle cx="6" cy="18" r="5" fill="#222"/><path d="M3 23q3-6 6 0z" fill="#867"/><circle cx="6" cy="17" r="2" fill="#cba"/></symbol>
    <symbol id="w-store" viewBox="0 0 24 24"><path d="M8 6V2h8v4" fill="none" stroke="#2aa3e8" stroke-width="2"/><rect x="1" y="5" width="22" height="18" rx="2" fill="#10498f"/><path d="M7 9h4v4H7z" fill="#f25022"/><path d="M13 9h4v4h-4z" fill="#7fba00"/><path d="M7 15h4v4H7z" fill="#00a4ef"/><path d="M13 15h4v4h-4z" fill="#ffb900"/></symbol>
    <symbol id="w-folder" viewBox="0 0 24 24"><path d="M0 3h9l3 3h11v16H0z" fill="#e8a317"/><path d="M0 8h24v15H0z" fill="#ffd257"/><path d="M5 23v-5q0-2 2-2h10q2 0 2 2v5z" fill="#1b78c8"/></symbol>
    <symbol id="w-copilot" viewBox="0 0 24 24"><path d="M8 2h8q2 0 3 5h-4q-2 0-3 3l-2 6q-1 3-4 3H3q-4-1-2-6l2-7q1-4 5-4z" fill="url(#gCopL)"/><path d="M9 2h7q2 0 3 5h-4q-2 0-3 2-2-1-3-7z" fill="#1b55d0"/><path d="M16 22H9q-3 0-3-4 3 0 4-3l2-5q1-4 4-4h5q4 1 2 6l-2 6q-1 4-5 4z" fill="url(#gCopR)"/><path d="M13 9l-3 7h2l3-7z" fill="#eedcd0"/></symbol>
    <symbol id="w-whats" viewBox="0 0 24 24"><path d="M1.500 22.500l1.500-6A10.500 10.500 0 1 1 7.500 21z" fill="none" stroke="#1d8a50" stroke-width="2"/><path d="M8 6c-4 3 2 12 8 12 3-1 3-3 2-4l-3-1-1 2c-2 0-5-3-5-5l1-1-1-3z" fill="#1d8a50"/></symbol>
    <symbol id="w-paint" viewBox="0 0 24 24"><path d="M12 2C4 2 0 9 2 15c1 4 4 5 6 3 3-2 5 0 5 3 4 1 8-3 9-8 1-6-4-11-10-11z" fill="#2a9ae0"/><g><circle cx="7" cy="8" r="2" fill="#f44"/><circle cx="12" cy="5" r="2" fill="#fc3"/><circle cx="5" cy="13" r="2" fill="#6d4"/><circle cx="17" cy="7" r="2" fill="#fff"/></g><path d="M17 10h3l1 8-1 6h-3l-1-6z" fill="#a85a20"/><path d="M16 9h5v4h-5z" fill="#f5c56a"/></symbol>
    <symbol id="w-hill" viewBox="0 0 48 28" preserveAspectRatio="none"><circle cx="12" cy="6" r="4" fill="#ffb52a"/><path d="M0 22C2 14 8 17 14 9c4-5 8-3 11-4l8-1c5 4 6 9 11 13l4 5c-4 5-12 2-18 5-8-2-18 0-30-5z" fill="#6cb04c"/><path d="M4 20q8-8 16-8M12 23q10-6 15-13M23 25q8-5 7-15M36 24q3-4 0-8" fill="none" stroke="#2e7a35" stroke-width="2"/><path d="M32 5q-4 5 1 8t2 9l-3 5" fill="none" stroke="#f3d2a2" stroke-width="2"/><path d="M26 2h7v4h-7z" fill="#9ab"/><path d="M25 2l5-2 4 2z" fill="#c44"/></symbol>
    <symbol id="w-wifi" viewBox="0 0 24 24"><g fill="none" stroke="#222" stroke-width="1.600"><path d="M1 9q11-9 22 0M4 13q8-7 16 0M8 16q4-4 8 0"/></g><circle cx="12" cy="19" r="2" fill="#222"/></symbol>
    <symbol id="w-sound" viewBox="0 0 24 24"><path d="M1 9h4l5-5v16l-5-5H1z" fill="none" stroke="#222" stroke-width="1.600"/><path d="M13 9q3 3 0 6M16 6q5 6 0 12M19 3q8 9 0 18" fill="none" stroke="#222" stroke-width="1.500"/></symbol>
    <symbol id="w-batt" viewBox="0 0 24 24"><rect x="2" y="7" width="18" height="12" rx="2" fill="#fff" stroke="#111" stroke-width="1.600"/><path d="M6 9h12v8H4v-4zM21 11h3v4h-3z" fill="#111"/><path d="M4 1L1 8h3l-1 6 6-8H6l2-5z" fill="#111" stroke="#efdfd0" stroke-width=".6"/></symbol>
  </svg>

  <!-- Title bar -->
  <header class="titlebar">
    <svg class="app-icon"><use href="#i-rhino"/></svg>
    <h1>kutu kilit son (225 KB) - Rhinoceros 6 Commercial - [Top]</h1>
    <div class="win-buttons">
      <button title="Minimize"><svg viewBox="0 0 10 10"><path d="M0 5.500h10" stroke="#000"/></svg></button>
      <button title="Restore"><svg viewBox="0 0 10 10"><path d="M.5 2.500h7v7h-7zM2.500 2V.5h7v7H8" fill="none" stroke="#000"/></svg></button>
      <button title="Close"><svg viewBox="0 0 10 10"><path d="M0 0l10 10M10 0L0 10" stroke="#000"/></svg></button>
    </div>
  </header>

  <nav class="menubar">
    <a href="#">File</a><a href="#">Edit</a><a href="#">View</a><a href="#">Curve</a><a href="#">Surface</a><a href="#">Solid</a><a href="#">Mesh</a><a href="#">Dimension</a><a href="#">Transform</a><a href="#">Tools</a><a href="#">Analyze</a><a href="#">Render</a><a href="#">Panels</a><a href="#">Help</a>
  </nav>

  <!-- Toolbars -->
  <div class="toolbars">
    <div class="toolbar standard">
      <button class="tool" title="New"><svg><use href="#i-new"/></svg></button>
      <button class="tool" title="Open"><svg><use href="#i-open"/></svg></button>
      <button class="tool more" title="Save"><svg><use href="#i-save"/></svg></button>
      <button class="tool" title="Print"><svg><use href="#i-print"/></svg></button>
      <button class="tool" title="Document Properties"><svg><use href="#i-props"/></svg></button>
      <button class="tool" title="Cut"><svg><use href="#i-cut"/></svg></button>
      <button class="tool" title="Copy"><svg><use href="#i-copy"/></svg></button>
      <button class="tool" title="Paste"><svg><use href="#i-paste"/></svg></button>
      <button class="tool more" title="Undo"><svg><use href="#i-undo"/></svg></button>
      <button class="tool" title="Pan"><svg><use href="#i-pan"/></svg></button>
      <button class="tool" title="Rotate View"><svg><use href="#i-rotate"/></svg></button>
      <button class="tool" title="Zoom Dynamic"><svg><use href="#i-zoom"/></svg></button>
      <button class="tool" title="Zoom Window"><svg><use href="#i-zoomwin"/></svg></button>
      <button class="tool" title="Zoom Extents"><svg><use href="#i-zoomext"/></svg></button>
      <button class="tool" title="Zoom Selected"><svg><use href="#i-zoomsel"/></svg></button>
      <button class="tool more" title="Undo View Change"><svg><use href="#i-zoomundo"/></svg></button>
      <button class="tool more" title="4 Viewports"><svg><use href="#i-4view"/></svg></button>
      <button class="tool more" title="Set View"><svg><use href="#i-car"/></svg></button>
      <button class="tool more" title="Set CPlane"><svg><use href="#i-cplane"/></svg></button>
      <button class="tool more" title="Object Snap"><svg><use href="#i-circ"/></svg></button>
      <button class="tool more" title="Select"><svg><use href="#i-sel"/></svg></button>
      <button class="tool more" title="Hide"><svg><use href="#i-bulb"/></svg></button>
      <button class="tool more" title="Lock"><svg><use href="#i-lock"/></svg></button>
      <button class="tool more" title="Layers"><svg><use href="#i-layer"/></svg></button>
      <button class="tool more" title="Properties"><svg><use href="#i-wheel"/></svg></button>
      <button class="tool" title="Shade"><svg><use href="#i-sphere"/></svg></button>
      <button class="tool more" title="Render Preview"><svg><use href="#i-spheregrid"/></svg></button>
      <button class="tool more" title="Render"><svg><use href="#i-ball"/></svg></button>
      <button class="tool more" title="Spotlight"><svg><use href="#i-spot"/></svg></button>
      <button class="tool more" title="Options"><svg><use href="#i-gear"/></svg></button>
      <button class="tool more" title="Dimension"><svg><use href="#i-dims"/></svg></button>
      <button class="tool" title="Grasshopper"><svg><use href="#i-gh"/></svg></button>
      <button class="tool more" title="Help"><svg><use href="#i-help"/></svg></button>
    </div>
    <div class="toolbar cplanes">
      <button class="tool" title="CPlane Origin"><svg><use href="#i-cplane"/></svg></button>
      <button class="tool" title="CPlane Elevation"><svg><use href="#c-elev"/></svg></button>
      <button class="tool" title="CPlane to Object"><svg><use href="#c-obj"/></svg></button>
      <button class="tool" title="CPlane to Surface"><svg><use href="#c-srf"/></svg></button>
      <button class="tool" title="CPlane to Curve"><svg><use href="#c-crv"/></svg></button>
      <button class="tool" title="CPlane Perpendicular"><svg><use href="#c-crv2"/></svg></button>
      <button class="tool" title="Rotate CPlane"><svg><use href="#c-vert"/></svg></button>
      <button class="tool" title="CPlane 3 Points"><svg><use href="#c-3pt"/></svg></button>
      <button class="tool" title="CPlane X Axis"><svg><use href="#c-x"/></svg></button>
      <button class="tool" title="CPlane Z Axis"><svg><use href="#c-z"/></svg></button>
      <span class="sep"></span>
      <button class="tool" title="Previous CPlane"><svg><use href="#c-prev"/></svg></button>
      <button class="tool" title="Select CPlane"><svg><use href="#c-pick"/></svg></button>
      <button class="tool" title="Named CPlanes"><svg><use href="#c-named"/></svg></button>
      <button class="tool" title="Save CPlane"><svg><use href="#c-save"/></svg></button>
      <button class="tool" title="Read CPlane"><svg><use href="#c-open"/></svg></button>
      <button class="tool" title="Grid Options"><svg><use href="#c-prop"/></svg></button>
      <span class="sep"></span>
      <button class="tool" title="Plan View"><svg><use href="#c-top"/></svg></button>
      <button class="tool" title="World Top"><svg><use href="#c-down"/></svg></button>
      <button class="tool" title="World Bottom"><svg><use href="#c-up"/></svg></button>
      <button class="tool" title="World Front"><svg><use href="#c-front"/></svg></button>
      <button class="tool" title="World Back"><svg><use href="#c-back"/></svg></button>
      <button class="tool" title="World Right"><svg><use href="#c-left"/></svg></button>
      <button class="tool" title="World Left"><svg><use href="#c-right"/></svg></button>
      <span class="sep"></span>
      <button class="tool" title="Orient to CPlane"><svg><use href="#c-world"/></svg></button>
    </div>
  </div>

  <!-- Command area -->
  <section class="command">
    <div class="history">
      <pre>Drag a window to zoom ( All  Dynamic  Extents  Factor  In  Out  Selected  Target  1To1 ): _All
Choose option ( Extents  Selected  1To1 ): _Extents</pre>
      <span class="track"></span>
    </div>
    <div class="prompt">
      <label for="cmd">Command:</label>
      <span class="caret"></span>
      <input id="cmd" type="text">
      <div class="spin"><button title="Up">▲</button><button title="Down">▼</button></div>
    </div>
  </section>

  <main class="workspace">
    <aside class="palette">
      <button class="tool" title="Cancel"><svg><use href="#p-arrow"/></svg></button>
      <button class="tool more" title="Point"><svg><use href="#p-point"/></svg></button>
      <button class="tool more" title="Polyline"><svg><use href="#p-poly"/></svg></button>
      <button class="tool more" title="Curve"><svg><use href="#p-curve"/></svg></button>
      <button class="tool more" title="Circle"><svg><use href="#p-circle"/></svg></button>
      <button class="tool more" title="Ellipse"><svg><use href="#p-ellipse"/></svg></button>
      <button class="tool more" title="Arc"><svg><use href="#p-arc"/></svg></button>
      <button class="tool more" title="Rectangle"><svg><use href="#p-rect"/></svg></button>
      <button class="tool more" title="Polygon"><svg><use href="#p-hex"/></svg></button>
      <button class="tool more" title="Fillet Curves"><svg><use href="#p-fillet"/></svg></button>
      <button class="tool more" title="Surface from Points"><svg><use href="#p-srf"/></svg></button>
      <button class="tool more" title="Fillet Surface"><svg><use href="#p-loft"/></svg></button>
      <button class="tool more" title="Box"><svg><use href="#p-box"/></svg></button>
      <button class="tool more" title="Boolean Union"><svg><use href="#p-spheres"/></svg></button>
      <button class="tool more" title="Project Curves"><svg><use href="#p-proj"/></svg></button>
      <button class="tool more" title="Mesh"><svg><use href="#p-mesh"/></svg></button>
      <button class="tool" title="Join"><svg><use href="#p-join"/></svg></button>
      <button class="tool" title="Explode"><svg><use href="#p-explode"/></svg></button>
      <button class="tool" title="Trim"><svg><use href="#p-trim"/></svg></button>
      <button class="tool" title="Split"><svg><use href="#p-split"/></svg></button>
      <button class="tool more" title="Group"><svg><use href="#p-group"/></svg></button>
      <button class="tool" title="Ungroup"><svg><use href="#p-ungroup"/></svg></button>
      <button class="tool" title="Edit Points"><svg><use href="#p-edit"/></svg></button>
      <button class="tool more" title="Control Points"><svg><use href="#p-ctrl"/></svg></button>
      <button class="tool" title="Text"><svg><use href="#p-text"/></svg></button>
      <button class="tool more" title="Move"><svg><use href="#p-move"/></svg></button>
      <button class="tool" title="Copy Objects"><svg><use href="#p-copy"/></svg></button>
      <button class="tool" title="Rotate"><svg><use href="#p-rot"/></svg></button>
      <button class="tool more" title="Solid Tools"><svg><use href="#p-bool"/></svg></button>
      <button class="tool more" title="Extrude"><svg><use href="#p-array"/></svg></button>
      <button class="tool more" title="Array"><svg><use href="#p-grid"/></svg></button>
      <button class="tool more" title="Align"><svg><use href="#p-align"/></svg></button>
      <button class="tool more" title="Bend"><svg><use href="#p-bend"/></svg></button>
      <button class="tool more" title="Check"><svg><use href="#p-check"/></svg></button>
      <button class="tool more" title="Block"><svg><use href="#p-solids"/></svg></button>
      <button class="tool more" title="Object Properties"><svg><use href="#p-pyr"/></svg></button>
    </aside>

    <div class="center">
      <div class="viewport">
        <button class="view-label"><b>Top</b><span class="drop"></span></button>
        <svg class="scene" viewBox="66 155 1553 808" preserveAspectRatio="xMinYMin slice">
          <g id="grid"></g>
          <path class="y-axis" d="M1302 155V963"/>
          <!-- lock body -->
          <g class="edge">
            <path d="M277 651V560H129.500A315.400 315.400 0 0 1 739.500 560H592V651"/>
            <path d="M198 612.500H671V795H198zM198 651H671M198 755H671M198 758H671"/>
            <path d="M277 608.500H592M277 639H592M434.500 612V600.500H592V612"/>
          </g>
          <path class="iso" d="M434.500 323V795M161.500 480.500H707.500M198 631.500H277M592 631.500H671M277 644.500H592M198 703.500H671M198 775.500H671M198 780.500H671"/>
          <!-- key plate -->
          <g class="edge">
            <path d="M925 479.500H1556V795H925zM965 519H1517V755.500H965z"/>
            <path d="M1083 558H1398V637H1477V716H1004V637H1083z"/>
            <circle cx="1240.500" cy="637" r="79"/>
          </g>
          <path class="iso" d="M1240.500 479V558M1240.500 716V795M925 637.500H1161M1319 637.500H1556"/>
          <path class="axis" d="M102.500 897V927.500H132"/>
          <text class="axis-name" x="104" y="897">y</text>
          <text class="axis-name" x="135" y="928">x</text>
        </svg>
      </div>
      <div class="view-tabs">
        <button>Perspective</button><button class="active">Top</button><button>Front</button><button>Right</button><button class="active add" title="New viewport"><svg viewBox="0 0 10 10"><path d="M3.500.5h3v3h3v3h-3v3h-3v-3h-3v-3h3z" fill="none" stroke="#555"/></svg></button>
      </div>
    </div>

    <aside class="panel">
      <div class="panel-tabs">
        <button class="active"><svg><use href="#i-wheel"/></svg>P...</button>
        <button><svg><use href="#i-layer"/></svg>L...</button>
        <button><svg><use href="#t-render"/></svg>R...</button>
        <button><svg><use href="#t-brush"/></svg>M...</button>
        <button><svg><use href="#i-open"/></svg>Li...</button>
        <button><svg><use href="#t-helpwin"/></svg>H...</button>
        <svg class="cog" viewBox="0 0 24 24"><circle cx="12" cy="12" r="7" fill="none" stroke="#bbb" stroke-width="6"/><circle cx="12" cy="12" r="10.500" fill="none" stroke="#bbb" stroke-width="3" stroke-dasharray="4 4"/></svg>
      </div>
      <div class="panel-body">
        <div class="panel-modes">
          <button class="active" title="View"><svg><use href="#t-camera"/></svg></button>
          <button title="Frame"><svg><use href="#t-frame"/></svg></button>
        </div>
        <table class="props">
          <colgroup><col class="col-gut"><col class="col-name"><col></colgroup>
          <tbody>
            <tr class="group"><th colspan="3">Viewport</th></tr>
            <tr><td class="gut"></td><th><label for="title">Title</label></th><td><input id="title" value="Top"></td></tr>
            <tr class="off"><td class="gut"></td><th>Width</th><td class="fixed">1553</td></tr>
            <tr class="off"><td class="gut"></td><th>Height</th><td class="fixed">808</td></tr>
            <tr><td class="gut"></td><th><label for="proj">Projection</label></th><td class="pick"><select id="proj"><option>Parallel</option><option>Perspective</option></select></td></tr>
            <tr class="group"><th colspan="3">Camera</th></tr>
            <tr class="off"><td class="gut"></td><th>Lens Length</th><td class="fixed">50.0</td></tr>
            <tr><td class="gut"></td><th><label for="rot">Rotation</label></th><td><input id="rot" value="0.0"></td></tr>
            <tr><td class="gut"></td><th><label for="xl">X Location</label></th><td><input id="xl" value="-29.138"></td></tr>
            <tr><td class="gut"></td><th><label for="yl">Y Location</label></th><td><input id="yl" value="53.96"></td></tr>
            <tr><td class="gut"></td><th><label for="zl">Z Location</label></th><td><input id="zl" value="56.494"></td></tr>
            <tr><td class="gut"></td><th>Distance to Target</th><td class="fixed">31.494</td></tr>
            <tr><td class="gut"></td><th>Location</th><td class="act"><button>Place...</button></td></tr>
            <tr class="group"><th colspan="3">Target</th></tr>
            <tr><td class="gut"></td><th><label for="xt">X Target</label></th><td><input id="xt" value="-29.138"></td></tr>
            <tr><td class="gut"></td><th><label for="yt">Y Target</label></th><td><input id="yt" value="53.96"></td></tr>
            <tr><td class="gut"></td><th><label for="zt">Z Target</label></th><td><input id="zt" value="25.0"></td></tr>
            <tr><td class="gut"></td><th>Location</th><td class="act"><button>Place...</button></td></tr>
            <tr class="group"><th colspan="3">Wallpaper</th></tr>
            <tr><td class="gut"></td><th>Filename</th><td class="file"><div>(none)<button title="Browse">...</button></div></td></tr>
            <tr><td class="gut"></td><th><label for="show">Show</label></th><td class="tick"><input id="show" type="checkbox" checked></td></tr>
            <tr><td class="gut"></td><th><label for="gray">Gray</label></th><td class="tick"><input id="gray" type="checkbox" checked></td></tr>
          </tbody>
        </table>
      </div>
    </aside>
  </main>

  <!-- Object snaps -->
  <div class="osnaps">
    <label><input type="checkbox" checked>End</label>
    <label><input type="checkbox" checked>Near</label>
    <label><input type="checkbox">Point</label>
    <label><input type="checkbox" checked>Mid</label>
    <label><input type="checkbox">Cen</label>
    <label><input type="checkbox">Int</label>
    <label><input type="checkbox">Perp</label>
    <label><input type="checkbox" checked>Tan</label>
    <label><input type="checkbox" checked>Quad</label>
    <label><input type="checkbox">Knot</label>
    <label><input type="checkbox">Vertex</label>
    <label><input type="checkbox" class="soft">Project</label>
    <label><input type="checkbox" class="soft">Disable</label>
  </div>

  <div class="statusbar">
    <button>CPlane</button>
    <span>x -21.939</span>
    <span>y 76.285</span>
    <span>z 0.000</span>
    <span>Millimeters</span>
    <button class="layer"><i></i>Default</button>
    <button class="on">Grid Snap</button>
    <button class="on">Ortho</button>
    <button class="on">Planar</button>
    <button class="on">Osnap</button>
    <button>SmartTrack</button>
    <button class="on">Gumball</button>
    <button class="on">Record History</button>
    <button>Filter</button>
    <span class="memory">Available physical memory: 8478 MB</span>
    <span></span>
  </div>

  <!-- Windows taskbar -->
  <footer class="taskbar">
    <button class="widget">
      <svg viewBox="0 0 30 28"><path d="M2 6h22v20H2z" fill="#0f8a1e"/><path d="M20 6h4v20h-4z" fill="#0a6515"/><circle cx="11" cy="12" r="4" fill="#fff"/><path d="M9 15h4v4H9z" fill="#fff"/><path d="M4 22h14v2H4z" fill="#e8f000"/></svg>
      <span class="badge">8</span>
      <span class="widget-text">İzleme listesi<small>Fikirler</small></span>
    </button>
    <div class="apps">
      <button title="Start"><svg><use href="#w-start"/></svg></button>
      <label class="search">
        <svg class="loupe" viewBox="0 0 16 16"><circle cx="7" cy="7" r="5.500" fill="none" stroke="#222" stroke-width="1.500"/><path d="M11 11l4 4" stroke="#222" stroke-width="1.500"/></svg>
        <input type="text" placeholder="Ara">
        <svg class="hill"><use href="#w-hill"/></svg>
      </label>
      <button title="Task View"><svg><use href="#w-task"/></svg></button>
      <button title="Chrome" class="open"><svg><use href="#w-chrome"/></svg></button>
      <button title="Edge"><svg><use href="#w-edge"/></svg></button>
      <button title="Store"><svg><use href="#w-store"/></svg></button>
      <button title="Explorer" class="open"><svg><use href="#w-folder"/></svg></button>
      <button title="Copilot"><svg><use href="#w-copilot"/></svg></button>
      <button title="WhatsApp"><svg><use href="#w-whats"/></svg></button>
      <button title="Paint"><svg><use href="#w-paint"/></svg></button>
      <button title="Rhinoceros" class="open current"><svg><use href="#i-rhino"/></svg></button>
    </div>
    <div class="tray">
      <button title="Hidden icons"><svg class="chev" viewBox="0 0 12 12"><path d="M1 9l5-5 5 5" fill="none" stroke="#222" stroke-width="1.500"/></svg></button>
      <div class="lang">TUR<br>TRF</div>
      <div class="sys">
        <svg><use href="#w-wifi"/></svg>
        <svg><use href="#w-sound"/></svg>
        <svg><use href="#w-batt"/></svg>
      </div>
      <div class="clock">10:07<br>21.05.2025</div>
    </div>
  </footer>

  <script>
    // construction grid: minor line every unit, major line every 10
    const grid = document.getElementById('grid');
    const step = 15.77;
    let minor = '';
    let major = '';

    for (let i = -78; i <= 20; i++) {
      const x = Math.floor(1302 + i * step) + 0.5;
      if (i % 10 === 0) major += `M${x} 155V963`;
      else minor += `M${x} 155V963`;
    }
    for (let i = -19; i <= 31; i++) {
      const y = Math.floor(464 + i * step) + 0.5;
      if (i % 10 === 0) major += `M66 ${y}H1619`;
      else minor += `M66 ${y}H1619`;
    }
    grid.innerHTML = `<path class="minor" d="${minor}"/><path class="major" d="${major}"/>`;
  </script>

</body>
</html>
```
FILE: styles.css
```css
* {
  box-sizing: border-box;
}

body {
  margin: 0;
  height: 100vh;
  display: flex;
  flex-direction: column;
  font-family: "Open Sans", "Noto Sans", sans-serif;
  font-size: 12px;
  line-height: 16px;
  color: #000;
  background: #ebecf0;
  overflow: hidden;
}

button,
input,
select {
  font: inherit;
  color: inherit;
  border: none;
  padding: 0;
  margin: 0;
  background: none;
}

svg {
  display: block;
  flex: none;
}

.sprite {
  position: absolute;
}

/* Title and menu */
.titlebar {
  display: flex;
  align-items: center;
  height: 23px;
  padding-left: 2px;
  background: #e4f7f7;
}

.app-icon {
  width: 16px;
  height: 16px;
}

.titlebar h1 {
  flex: 1;
  margin: 0 0 0 6px;
  font-size: 12px;
  font-weight: 400;
}

.win-buttons {
  display: flex;
  align-self: flex-start;
  margin-right: 2px;
}

.win-buttons button {
  display: grid;
  place-items: center;
  width: 46px;
  height: 20px;
}

.win-buttons svg {
  width: 10px;
  height: 10px;
}

.menubar {
  display: flex;
  align-items: center;
  gap: 12px;
  height: 19px;
  padding: 0 7px;
  background: #fff;
}

.menubar a {
  color: #000;
  text-decoration: none;
}

/* Toolbars */
.toolbars {
  display: grid;
  grid-template-columns: 1077px 1fr;
  height: 55px;
  border-bottom: 1px solid #d3d9e6;
}

.toolbar {
  display: flex;
  align-items: flex-start;
  padding: 4px 0 0 5px;
}

.toolbar::before {
  content: "";
  width: 3px;
  height: 48px;
  margin-left: -3px;
  border-left: 1px solid #cdd5e5;
  border-right: 1px solid #cdd5e5;
}

.standard {
  border-right: 1px solid #d3d9e6;
}

.cplanes {
  padding-left: 9px;
}

.tool {
  position: relative;
  display: grid;
  place-items: center;
  width: 28px;
  height: 28px;
}

.tool svg {
  width: 24px;
  height: 24px;
}

.more::after {
  content: "";
  position: absolute;
  right: 0;
  bottom: 0;
  border: 3px solid #666;
  border-left-color: transparent;
  border-top-color: transparent;
}

.sep {
  width: 2px;
  height: 28px;
  margin: 0 2px;
  background: #d0d2d8;
}

/* Command */
.command {
  margin: 3px 2px 7px 3px;
  padding-left: 4px;
  border-left: 1px solid #cdd5e5;
}

.history {
  display: flex;
  justify-content: space-between;
  height: 28px;
  background: #fff;
}

.history pre {
  margin: 0 1px;
  font: inherit;
  line-height: 14px;
}

.track {
  width: 15px;
  background: #f0f0f0;
}

.prompt {
  display: flex;
  align-items: center;
  height: 19px;
  padding-left: 1px;
  border-top: 1px solid #b9c2dc;
  background: #fff;
}

.prompt label {
  font-weight: 700;
}

.caret {
  width: 1px;
  height: 14px;
  margin-left: 3px;
  background: #000;
}

.prompt input {
  flex: 1;
  outline: none;
}

.spin {
  display: flex;
  flex-direction: column;
  width: 15px;
}

.spin button {
  height: 8px;
  border: 1px solid #ccc;
  font-size: 6px;
  line-height: 6px;
}

/* Workspace */
.workspace {
  flex: 1;
  display: grid;
  grid-template-columns: 65px 1fr 300px;
  grid-template-rows: minmax(0, 1fr);
  min-height: 0;
}

.palette {
  display: grid;
  grid-template-columns: 28px 28px;
  align-content: start;
  padding-left: 1px;
}

.palette::before {
  content: "";
  grid-column: 1 / 3;
  height: 3px;
  margin: 3px 0 1px 2px;
  border-top: 1px solid #cdd5e5;
  border-bottom: 1px solid #cdd5e5;
}

.center {
  display: flex;
  flex-direction: column;
  min-width: 0;
}

.viewport {
  position: relative;
  flex: 1;
  min-height: 0;
  border: 1px solid #b9c2d6;
  background: #9da3ab;
}

.scene {
  width: 100%;
  height: 100%;
}

.minor {
  stroke: #949aa2;
}

.major {
  stroke: #858b93;
}

.y-axis {
  stroke: #3c963c;
  stroke-width: 2;
}

.edge {
  fill: none;
  stroke: #000;
  stroke-width: 2;
}

.iso {
  fill: none;
  stroke: #000;
}

.axis {
  fill: none;
  stroke: #555;
}

.axis-name {
  font-size: 13px;
  fill: #555;
}

.view-label {
  position: absolute;
  top: 0;
  left: 0;
  display: flex;
  align-items: center;
  height: 18px;
  padding-left: 7px;
  background: #8aa4c4;
}

.drop {
  margin-left: 6px;
  padding: 5px 2px 5px 1px;
  border-left: 1px solid #000;
}

.drop::after {
  content: "";
  display: block;
  border: 4px solid transparent;
  border-top-color: #000;
  border-bottom-width: 0;
}

.view-tabs {
  display: flex;
  height: 24px;
  padding: 1px 0 3px;
}

.view-tabs button {
  padding: 0 4px 0 8px;
  border-right: 1px solid #b9c2dc;
  border-bottom: 1px solid #b9c2dc;
  border-radius: 0 0 4px 10px;
  background: #d9d9da;
}

.view-tabs .active {
  background: #f3f4f8;
}

.view-tabs .add {
  padding: 0 6px 0 8px;
}

.add svg {
  width: 10px;
  height: 10px;
}

/* Properties panel */
.panel {
  display: flex;
  flex-direction: column;
  padding: 3px 0 6px 7px;
}

.panel-tabs {
  display: flex;
  height: 25px;
  padding-top: 4px;
  border-top: 1px solid #c3cbdd;
  font-size: 13px;
}

.panel-tabs button {
  display: flex;
  align-items: center;
  gap: 3px;
  width: 45px;
  padding-left: 4px;
  white-space: nowrap;
  border-left: 1px solid #c3cbdd;
  border-top: 1px solid #c3cbdd;
  border-radius: 4px 18px 0 0;
  background: #d9dadd;
}

.panel-tabs .active {
  background: #f6f7f9;
}

.panel-tabs button svg {
  width: 16px;
  height: 16px;
}

.panel-tabs .cog {
  width: 14px;
  height: 14px;
  margin: 4px 0 0 6px;
}

.panel-body {
  flex: 1;
  padding: 4px 7px 4px 4px;
  border: 1px solid #b9c2d6;
  background: #f6f7f9;
}

.panel-modes {
  display: flex;
  gap: 4px;
  margin-bottom: 5px;
}

.panel-modes button {
  display: grid;
  place-items: center;
  width: 26px;
  height: 26px;
  border-radius: 3px;
  background: #fff;
}

.panel-modes .active {
  border: 1px solid #2a5f95;
  background: #b5cfea;
}

.panel-modes svg {
  width: 22px;
  height: 22px;
}

.props {
  width: 100%;
  border-collapse: collapse;
  table-layout: fixed;
  border: 1px solid #e9eaee;
}

.col-gut {
  width: 18px;
}

.col-name {
  width: 122px;
}

.props td,
.props th {
  height: 21px;
  padding: 0 4px;
  border-bottom: 1px solid #e9eaee;
  background: #fff;
  font-weight: 400;
  text-align: left;
  line-height: 18px;
}

.props .group th {
  height: 26px;
  padding: 0 3px;
  background: #f6f7f9;
  font-size: 14px;
}

.props .gut {
  background: #f6f7f9;
}

.props td:last-child {
  border-left: 1px solid #e9eaee;
}

.props .fixed {
  background: #e9eaee;
}

.off {
  color: #777;
}

.props td input:not([type]) {
  display: block;
  width: 100%;
  height: 18px;
}

.props .pick {
  position: relative;
  padding: 0 0 0 3px;
}

.pick select {
  display: block;
  width: 100%;
  height: 20px;
  appearance: none;
}

.pick::after {
  content: "";
  position: absolute;
  top: 5px;
  right: 6px;
  width: 6px;
  height: 6px;
  border-right: 1px solid #444;
  border-bottom: 1px solid #444;
  transform: rotate(45deg);
}

.pick::before {
  content: "";
  position: absolute;
  top: 0;
  right: 19px;
  height: 20px;
  border-left: 1px solid #bbb;
}

.props .act {
  padding: 0 0 0 1px;
}

.act button,
.file button {
  display: block;
  width: 100%;
  height: 18px;
  border: 1px solid #c8c8c8;
  border-radius: 4px;
  background: #fdfdfd;
  line-height: 15px;
}

.props .file {
  padding: 0 0 0 3px;
}

.file div {
  display: flex;
  justify-content: space-between;
}

.file button {
  width: 19px;
}

.props .tick {
  padding: 0 2px;
}

input[type="checkbox"] {
  appearance: none;
  display: grid;
  place-items: center;
  width: 13px;
  height: 13px;
  border: 1px solid #666;
  border-radius: 3px;
  background: #f5f5f5;
}

input[type="checkbox"]:checked {
  border-color: #005fb8;
  background: #005fb8;
}

input[type="checkbox"]:checked::after {
  content: "";
  width: 4px;
  height: 7px;
  margin-bottom: 2px;
  border-right: 1px solid #fff;
  border-bottom: 1px solid #fff;
  transform: rotate(45deg);
}

input[type="checkbox"].soft {
  border-color: #ddd;
  background: #fff;
}

/* Snaps and status */
.osnaps {
  display: grid;
  grid-template-columns: 43px 48px 51px 44px 44px 37px 47px 43px 52px 48px 56px 68px 60px;
  align-items: center;
  height: 24px;
  padding-left: 4px;
  margin-left: 4px;
  border-left: 1px solid #cdd5e5;
}

.osnaps label {
  display: flex;
  align-items: center;
  gap: 3px;
}

.statusbar {
  display: grid;
  grid-template-columns: 50px 88px 88px 88px 88px 168px 65px 45px 47px 48px 74px 59px 92px 40px 1fr 8px;
  height: 20px;
  border-top: 1px solid #b9c2dc;
  border-bottom: 1px solid #b5a9a5;
}

.statusbar > * {
  border-right: 1px solid #b9c2dc;
  line-height: 20px;
  text-align: center;
  white-space: nowrap;
}

.statusbar .on {
  font-weight: 700;
  background: #e2f2fd;
}

.statusbar .layer {
  display: flex;
  align-items: center;
  gap: 3px;
  padding-left: 3px;
}

.layer i {
  width: 14px;
  height: 14px;
  background: #000;
}

.statusbar .memory {
  padding-left: 1px;
  text-align: left;
}

/* Taskbar */
.taskbar {
  display: grid;
  grid-template-columns: 1fr auto 1fr;
  align-items: center;
  height: 48px;
  background: linear-gradient(90deg, #f0ded1, #eddace 60%, #ecdecd);
}

.widget {
  position: relative;
  justify-self: start;
  display: flex;
  align-items: center;
  gap: 2px;
  padding-left: 18px;
  text-align: left;
}

.widget svg {
  width: 30px;
  height: 28px;
}

.badge {
  position: absolute;
  top: -2px;
  left: 30px;
  width: 16px;
  height: 16px;
  border-radius: 50%;
  background: #c42b1c;
  color: #fff;
  text-align: center;
}

.widget small {
  display: block;
  font-size: 12px;
  color: #666;
}

.apps {
  display: flex;
  align-items: center;
}

.apps button {
  position: relative;
  display: grid;
  place-items: center;
  width: 44px;
  height: 40px;
}

.apps button svg {
  width: 24px;
  height: 24px;
}

.search {
  display: flex;
  align-items: center;
  width: 218px;
  height: 32px;
  margin: 0 2px 0 4px;
  padding: 0 4px 0 10px;
  border: 1px solid #e2d0c6;
  border-radius: 16px;
  background: #faf4f0;
}

.loupe {
  width: 15px;
  height: 15px;
}

.search input {
  flex: 1;
  width: 0;
  margin-left: 9px;
  font-size: 14px;
}

.search input::placeholder {
  color: #666;
}

.search .hill {
  width: 48px;
  height: 26px;
}

.open::after {
  content: "";
  position: absolute;
  bottom: 0;
  width: 6px;
  height: 3px;
  border-radius: 2px;
  background: #8a827e;
}

.apps .current {
  width: 40px;
  margin-left: 2px;
  border-radius: 4px;
  background: #f7ece5;
}

.current::after {
  width: 16px;
  background: #0067c0;
}

.tray {
  display: flex;
  align-items: center;
  justify-self: end;
  padding-right: 19px;
}

.chev {
  width: 12px;
  height: 12px;
}

.lang {
  margin: 0 16px 0 22px;
  text-align: center;
}

.sys {
  display: flex;
  gap: 8px;
  margin-right: 14px;
}

.sys svg {
  width: 16px;
  height: 16px;
}

.clock {
  text-align: right;
}
```
